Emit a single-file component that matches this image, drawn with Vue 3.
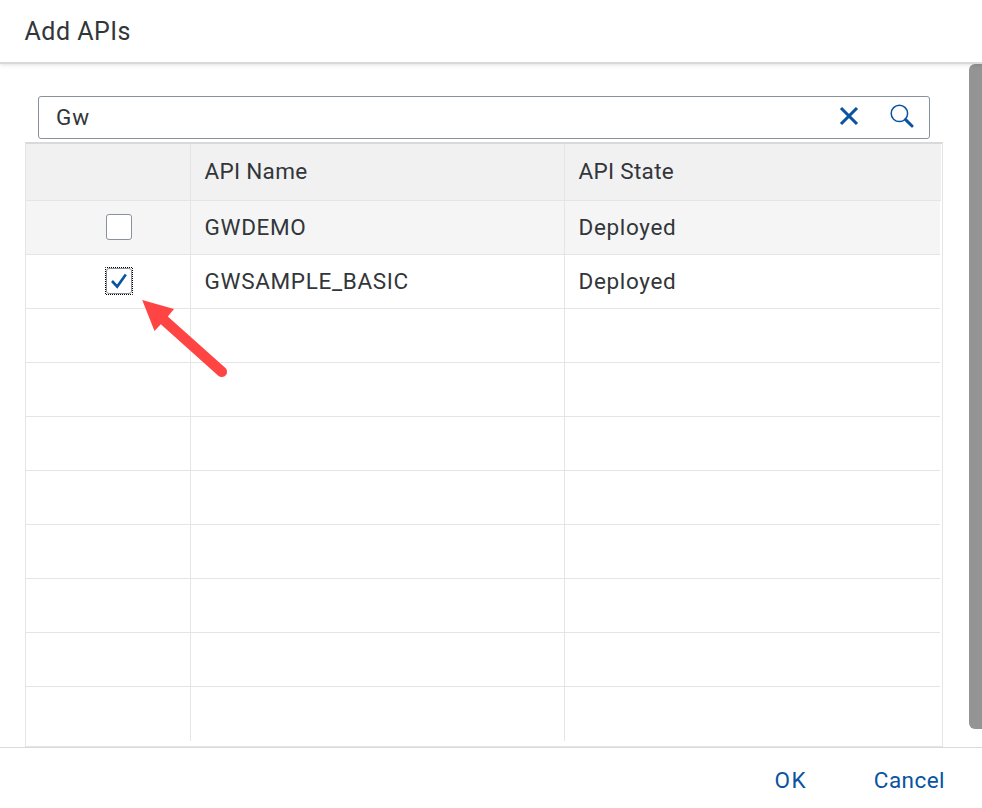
<script setup>
import { ref } from 'vue'

const query = ref('Gw')
const rows = ref([
  { name: 'GWDEMO', state: 'Deployed', checked: false, shaded: true },
  { name: 'GWSAMPLE_BASIC', state: 'Deployed', checked: true, shaded: false },
  ...Array.from({ length: 8 }, () => ({ name: '', state: '' })),
])
</script>

<template>
  <div class="dialog">
    <header class="title"><span>Add APIs</span></header>
    <main class="body">
      <div class="content">
        <div class="search">
          <span class="query">{{ query }}</span>
          <svg class="clear" width="20" height="20" viewBox="0 0 20 20">
            <path d="M2 2 18 18M18 2 2 18" fill="none" stroke="#0854a0" stroke-width="3.1" stroke-linecap="butt" />
          </svg>
          <svg class="find" width="24" height="24" viewBox="0 0 24 24">
            <circle cx="9.4" cy="9.4" r="8.2" fill="none" stroke="#0854a0" stroke-width="1.5" />
            <path d="M15.6 15.6 22 22" fill="none" stroke="#0854a0" stroke-width="3" stroke-linecap="round" />
          </svg>
        </div>
        <div class="table">
          <div class="row head">
            <div class="cell pick"></div>
            <div class="cell name">API Name</div>
            <div class="cell state">API State</div>
          </div>
          <div v-for="(row, i) in rows" :key="i" class="row" :class="{ shaded: row.shaded }">
            <div class="cell pick">
              <span v-if="row.name" class="focus">
                <svg v-if="row.checked" class="dots" width="28" height="28" viewBox="0 0 28 28">
                  <rect x=".5" y=".5" width="27" height="27" fill="none" stroke="#000" stroke-dasharray="1 1" stroke-dashoffset=".5" />
                </svg>
                <span class="box">
                  <svg v-if="row.checked" width="16" height="16" viewBox="0 0 16 16">
                    <path d="M1 8 6.2 13.6 14.8 1.6" fill="none" stroke="#0854a0" stroke-width="2.6" />
                  </svg>
                </span>
              </span>
            </div>
            <div class="cell name value">{{ row.name }}</div>
            <div class="cell state value">{{ row.state }}</div>
          </div>
        </div>
      </div>
      <div class="scroll"></div>
    </main>
    <footer class="footer">
      <span class="ok">OK</span>
      <span class="cancel">Cancel</span>
    </footer>
    <svg class="arrow" width="90" height="82" viewBox="0 0 90 82">
      <path d="M2.2 0 34 9 27.8 16.5 85.2 67.8A5.2 5.2 0 0 1 78.3 75.8L20.8 24.3 14.5 31Z" fill="#ff4444" />
    </svg>
  </div>
</template>

<style>
body { margin: 0; background: #fff; }
</style>

<style scoped>
.dialog {
  position: relative;
  display: flex;
  flex-direction: column;
  width: 982px;
  height: 808px;
  overflow: hidden;
  box-sizing: border-box;
  background: #fff;
  color: #32363a;
  font: 22.5px/28px Roboto, "Noto Sans", sans-serif;
  white-space: nowrap;
}
.dialog * { box-sizing: border-box; }
.title {
  z-index: 1;
  flex: none;
  height: 64px;
  padding: 16px 24.5px 0;
  border-bottom: 2px solid #d9d9d9;
  box-shadow: 0 1px 4px rgba(0, 0, 0, .12);
  font-size: 25px;
  line-height: 32px;
  letter-spacing: .5px;
}
.body { display: flex; justify-content: space-between; height: 683px; }
.content { width: 918px; margin-left: 25px; padding-top: 32px; }
.search {
  display: flex;
  align-items: center;
  width: 892px;
  height: 43px;
  margin: 0 0 3px 13px;
  padding: 0 15px 2px 17px;
  border: 1px solid #89919a;
  border-radius: 3px;
}
.query { flex: 1; letter-spacing: .8px; }
.clear { margin: 0 31px 2px 0; }
.find { margin-bottom: 2px; }
.table {
  height: 605px;
  border: 1px solid #e5e5e5;
  border-top: 2px solid #d9d9d9;
  padding-right: 2px;
}
.row { display: flex; height: 54px; border-bottom: 1px solid #e5e5e5; }
.row:last-child { border-bottom: 0; }
.shaded { background: #f5f5f5; }
.head { height: 57px; margin-right: -1px; background: #f1f1f1; }
.cell { display: flex; align-items: center; padding-bottom: 2px; letter-spacing: .3px; }
.pick { width: 165px; justify-content: center; padding-left: 21px; border-right: 1px solid #e5e5e5; }
.name { width: 374px; padding-left: 13.5px; border-right: 1px solid #e5e5e5; }
.state { flex: 1; padding-left: 13.5px; }
.value { letter-spacing: .67px; }
.focus { position: relative; display: flex; width: 28px; height: 28px; padding: 1px; }
.dots { position: absolute; left: 0; top: 0; }
.box {
  display: flex;
  align-items: center;
  justify-content: center;
  width: 26px;
  height: 26px;
  border: 1px solid #89919a;
  border-radius: 3px;
  background: #fff;
}
.scroll { width: 13px; height: 665px; border-radius: 6px 0 0 6px; background: #949494; }
.footer {
  display: flex;
  justify-content: flex-end;
  gap: 66.5px;
  height: 61px;
  padding: 18px 37px 0 0;
  border-top: 1px solid #d9d9d9;
  color: #0854a0;
}
.ok { letter-spacing: 1.6px; }
.cancel { letter-spacing: .45px; }
.arrow { position: absolute; left: 140px; top: 300px; }
</style>
